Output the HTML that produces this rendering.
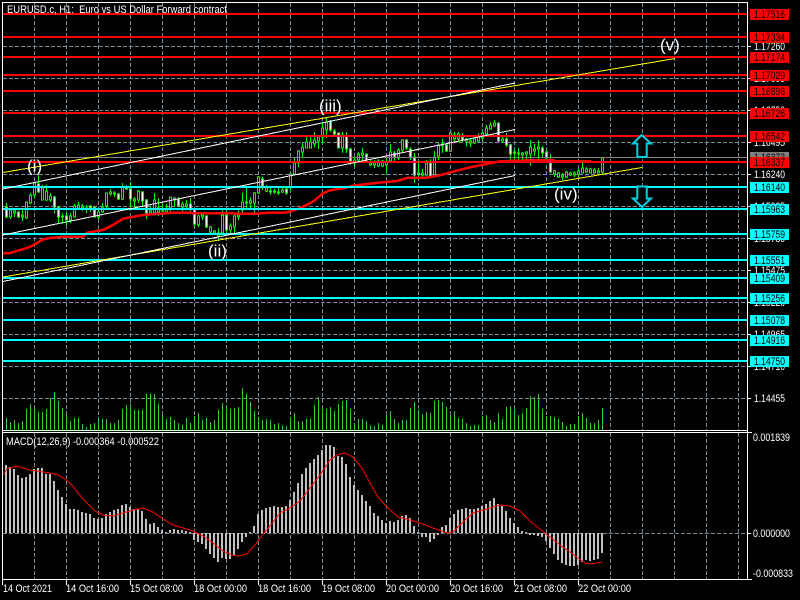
<!DOCTYPE html>
<html><head><meta charset="utf-8"><title>EURUSD.c H1</title>
<style>
html,body{margin:0;padding:0;background:#000;width:800px;height:600px;overflow:hidden}
svg{display:block;position:absolute;left:0;top:0}
text{font-family:"Liberation Sans",sans-serif;font-size:11px}
.w text,text.w{fill:#fff}
.k text{fill:#000}
</style></head><body>
<svg width="800" height="600" viewBox="0 0 800 600" xmlns="http://www.w3.org/2000/svg">
<rect width="800" height="600" fill="#000"/>
<!-- grid -->
<path shape-rendering="crispEdges" stroke="#778899" stroke-width="1" stroke-dasharray="4 2" fill="none" d="M34.5 3V430M66.5 3V430M98.5 3V430M130.5 3V430M162.5 3V430M194.5 3V430M226.5 3V430M258.5 3V430M290.5 3V430M322.5 3V430M354.5 3V430M386.5 3V430M418.5 3V430M450.5 3V430M482.5 3V430M514.5 3V430M546.5 3V430M578.5 3V430M610.5 3V430M642.5 3V430M674.5 3V430M706.5 3V430M738.5 3V430
M34.5 433V579M66.5 433V579M98.5 433V579M130.5 433V579M162.5 433V579M194.5 433V579M226.5 433V579M258.5 433V579M290.5 433V579M322.5 433V579M354.5 433V579M386.5 433V579M418.5 433V579M450.5 433V579M482.5 433V579M514.5 433V579M546.5 433V579M578.5 433V579M610.5 433V579M642.5 433V579M674.5 433V579M706.5 433V579M738.5 433V579
M3 46.5H747M3 78.5H747M3 110.5H747M3 142.5H747M3 174.5H747M3 206.5H747M3 238.5H747M3 270.5H747M3 302.5H747M3 334.5H747M3 366.5H747M3 398.5H747M3 533.5H747"/>
<!-- volumes -->
<path shape-rendering="crispEdges" stroke="#32cd32" stroke-width="1" fill="none" d="M6.5 430V418M10.5 430V422M14.5 430V420M18.5 430V423M22.5 430V421M26.5 430V409M30.5 430V404M34.5 430V409M38.5 430V412M42.5 430V412M46.5 430V409M50.5 430V398M54.5 430V392M58.5 430V401M62.5 430V408M66.5 430V414M70.5 430V421M74.5 430V418M78.5 430V418M82.5 430V424M86.5 430V427M90.5 430V424M94.5 430V423M98.5 430V419M102.5 430V419M106.5 430V419M110.5 430V423M114.5 430V423M118.5 430V420M122.5 430V409M126.5 430V405M130.5 430V404M134.5 430V410M138.5 430V410M142.5 430V410M146.5 430V394M150.5 430V394M154.5 430V394M158.5 430V404M162.5 430V415M166.5 430V419M170.5 430V417M174.5 430V420M178.5 430V423M182.5 430V425M186.5 430V418M190.5 430V423M194.5 430V416M198.5 430V413M202.5 430V420M206.5 430V418M210.5 430V422M214.5 430V420M218.5 430V410M222.5 430V403M226.5 430V405M230.5 430V409M234.5 430V408M238.5 430V407M242.5 430V388M246.5 430V394M250.5 430V402M254.5 430V411M258.5 430V417M262.5 430V420M266.5 430V419
M270.5 430V420M274.5 430V424M278.5 430V423M282.5 430V425M286.5 430V426M290.5 430V419M294.5 430V413M298.5 430V421M302.5 430V421M306.5 430V419M310.5 430V419M314.5 430V405M318.5 430V397M322.5 430V408M326.5 430V409M330.5 430V407M334.5 430V411M338.5 430V404M342.5 430V401M346.5 430V400M350.5 430V409M354.5 430V423M358.5 430V419M362.5 430V419M366.5 430V421M370.5 430V425M374.5 430V426M378.5 430V423M382.5 430V425M386.5 430V415M390.5 430V411M394.5 430V419M398.5 430V423M402.5 430V420M406.5 430V420M410.5 430V408M414.5 430V402M418.5 430V410M422.5 430V414M426.5 430V412M430.5 430V413M434.5 430V401M438.5 430V400M442.5 430V402M446.5 430V407M450.5 430V415M454.5 430V411M458.5 430V418M462.5 430V419M466.5 430V423M470.5 430V426M474.5 430V425M478.5 430V425M482.5 430V416M486.5 430V415M490.5 430V420M494.5 430V422M498.5 430V413M502.5 430V419M506.5 430V407M510.5 430V406M514.5 430V409M518.5 430V415M522.5 430V413M526.5 430V408M530.5 430V396M534.5 430V397M538.5 430V394
M542.5 430V409M546.5 430V416M550.5 430V416M554.5 430V417M558.5 430V419M562.5 430V422M566.5 430V426M570.5 430V424M574.5 430V424M578.5 430V416M582.5 430V413M586.5 430V418M590.5 430V423M594.5 430V423M598.5 430V420M602.5 430V408"/>
<!-- candle wicks -->
<path shape-rendering="crispEdges" stroke="#00ff00" stroke-width="1" fill="none" d="M6.5 203V218M10.5 209V219M14.5 210V217M18.5 211V218M22.5 210V221M26.5 202V219M30.5 193V204M34.5 182V197M38.5 175V193M42.5 185V200M46.5 185V201M50.5 193V202M54.5 196V213M58.5 207V223M62.5 213V224M66.5 212V225M70.5 213V223M74.5 204V217M78.5 202V210M82.5 204V211M86.5 205V213M90.5 205V212M94.5 207V217M98.5 208V220M102.5 203V213M106.5 193V208M110.5 189V196M114.5 191V197M118.5 193V200M122.5 183V200M126.5 185V190M130.5 182V207M134.5 197V207M138.5 190V203M142.5 191V206M146.5 199V219M150.5 206V215M154.5 193V213M158.5 198V216M162.5 205V213M166.5 204V213M170.5 197V213M174.5 197V207M178.5 197V207M182.5 202V212M186.5 200V208M190.5 198V213M194.5 208V227M198.5 213V227M202.5 213V220M206.5 215V228M210.5 226V233M214.5 230V234M218.5 228V241M222.5 209V233M226.5 210V233M230.5 223V233M234.5 213V233M238.5 210V220M242.5 193V213M246.5 187V209M250.5 197V208M254.5 192V213M258.5 176V194M262.5 177V190M266.5 185V192
M270.5 188V195M274.5 189V194M278.5 188V195M282.5 187V193M286.5 188V195M290.5 173V190M294.5 158V175M298.5 150V167M302.5 142V157M306.5 137V148M310.5 137V148M314.5 132V147M318.5 137V149M322.5 122V143M326.5 117V138M330.5 120V132M334.5 129V135M338.5 133V148M342.5 132V153M346.5 132V153M350.5 148V165M354.5 158V167M358.5 152V163M362.5 148V162M366.5 154V163M370.5 159V166M374.5 160V168M378.5 159V167M382.5 160V167M386.5 158V173M390.5 144V163M394.5 151V163M398.5 148V160M402.5 140V152M406.5 139V150M410.5 147V160M414.5 153V183M418.5 163V177M422.5 169V177M426.5 160V177M430.5 159V177M434.5 151V176M438.5 143V160M442.5 139V153M446.5 143V152M450.5 132V152M454.5 132V142M458.5 132V142M462.5 133V142M466.5 138V146M470.5 138V147M474.5 137V144M478.5 133V142M482.5 132V141M486.5 125V135M490.5 122V129M494.5 120V127M498.5 123V142M502.5 137V143M506.5 133V147M510.5 144V162M514.5 150V160M518.5 148V160M522.5 152V160M526.5 151V159M530.5 140V166M534.5 144V156M538.5 140V160M542.5 146V157M546.5 150V159M550.5 154V173M554.5 170V177M558.5 172V178M562.5 173V180M566.5 171V178M570.5 172V176M574.5 171V177M578.5 169V177M582.5 163V173M586.5 167V173M590.5 168V173M594.5 168V173M598.5 168V173M602.5 157V175"/>
<!-- bull bodies -->
<path shape-rendering="crispEdges" stroke="#00ff00" stroke-width="1" fill="#000" d="M9.5 210h2V217h-2zM13.5 211h2V213h-2zM21.5 215h2V217h-2zM25.5 202h2V218h-2zM29.5 195h2V203h-2zM33.5 183h2V195h-2zM41.5 188h2V200h-2zM45.5 191h2V200h-2zM49.5 196h2V200h-2zM61.5 216h2V217h-2zM69.5 216h2V220h-2zM73.5 206h2V217h-2zM77.5 205h2V208h-2zM81.5 206h2V208h-2zM85.5 208h2V209h-2zM97.5 212h2V217h-2zM101.5 207h2V212h-2zM105.5 193h2V206h-2zM109.5 192h2V194h-2zM113.5 193h2V194h-2zM121.5 187h2V199h-2zM133.5 199h2V201h-2zM137.5 191h2V200h-2zM149.5 211h2V213h-2zM153.5 200h2V213h-2zM157.5 208h2V212h-2zM161.5 210h2V211h-2zM165.5 209h2V212h-2zM169.5 197h2V208h-2zM173.5 198h2V200h-2zM181.5 204h2V207h-2zM185.5 204h2V206h-2zM197.5 216h2V225h-2zM201.5 215h2V217h-2zM209.5 227h2V232h-2zM213.5 231h2V233h-2zM217.5 233h2V236h-2zM221.5 215h2V233h-2zM229.5 226h2V230h-2zM233.5 216h2V227h-2zM237.5 215h2V217h-2zM241.5 202h2V210h-2zM245.5 202h2V203h-2zM249.5 201h2V203h-2zM253.5 193h2V203h-2zM257.5 177h2V193h-2zM265.5 188h2V191h-2z
M269.5 191h2V192h-2zM273.5 191h2V192h-2zM277.5 192h2V193h-2zM281.5 190h2V192h-2zM289.5 174h2V188h-2zM293.5 163h2V174h-2zM297.5 151h2V163h-2zM301.5 147h2V152h-2zM305.5 142h2V148h-2zM309.5 142h2V148h-2zM313.5 140h2V144h-2zM317.5 137h2V141h-2zM321.5 128h2V137h-2zM325.5 122h2V130h-2zM341.5 135h2V148h-2zM353.5 160h2V163h-2zM357.5 154h2V160h-2zM361.5 153h2V155h-2zM369.5 163h2V165h-2zM373.5 163h2V165h-2zM377.5 161h2V166h-2zM381.5 161h2V166h-2zM385.5 162h2V165h-2zM389.5 152h2V161h-2zM397.5 150h2V158h-2zM401.5 140h2V150h-2zM417.5 173h2V174h-2zM421.5 173h2V175h-2zM425.5 163h2V175h-2zM433.5 157h2V175h-2zM437.5 145h2V156h-2zM441.5 144h2V146h-2zM449.5 133h2V151h-2zM453.5 135h2V139h-2zM457.5 134h2V139h-2zM465.5 139h2V141h-2zM469.5 141h2V143h-2zM473.5 138h2V143h-2zM477.5 137h2V141h-2zM481.5 133h2V138h-2zM485.5 128h2V134h-2zM489.5 125h2V129h-2zM493.5 123h2V126h-2zM501.5 139h2V141h-2zM513.5 152h2V153h-2zM517.5 153h2V154h-2zM521.5 153h2V155h-2zM525.5 152h2V154h-2zM529.5 147h2V154h-2zM533.5 149h2V151h-2zM537.5 147h2V149h-2zM553.5 171h2V174h-2zM557.5 173h2V177h-2zM561.5 175h2V177h-2zM565.5 172h2V177h-2zM569.5 173h2V175h-2zM573.5 173h2V175h-2zM577.5 171h2V174h-2zM581.5 168h2V173h-2zM585.5 169h2V172h-2zM589.5 169h2V173h-2zM593.5 170h2V173h-2zM597.5 171h2V173h-2zM601.5 158h2V172h-2z"/>
<!-- bear bodies -->
<path shape-rendering="crispEdges" stroke="#00ff00" stroke-width="1" fill="#fff" d="M5.5 207h2V217h-2zM17.5 212h2V217h-2zM37.5 184h2V192h-2zM53.5 197h2V207h-2zM57.5 207h2V217h-2zM65.5 216h2V220h-2zM89.5 206h2V208h-2zM93.5 207h2V217h-2zM117.5 194h2V199h-2zM125.5 187h2V189h-2zM129.5 189h2V199h-2zM141.5 192h2V201h-2zM145.5 200h2V213h-2zM177.5 199h2V206h-2zM189.5 204h2V209h-2zM193.5 210h2V224h-2zM205.5 216h2V227h-2zM225.5 215h2V230h-2zM261.5 179h2V186h-2zM285.5 189h2V193h-2zM329.5 121h2V130h-2zM333.5 131h2V134h-2zM337.5 133h2V148h-2zM345.5 137h2V149h-2zM349.5 149h2V163h-2zM365.5 154h2V160h-2zM393.5 153h2V157h-2zM405.5 140h2V148h-2zM409.5 149h2V157h-2zM413.5 157h2V175h-2zM429.5 163h2V176h-2zM445.5 145h2V151h-2zM461.5 137h2V140h-2zM497.5 123h2V141h-2zM505.5 139h2V145h-2zM509.5 145h2V154h-2zM541.5 148h2V153h-2zM545.5 152h2V158h-2zM549.5 163h2V172h-2z"/>
<!-- moving average -->
<polyline shape-rendering="crispEdges" fill="none" stroke="#ff0000" stroke-width="2.5" points="3,253 10,253 20,250 30,247 43,239.5 50,238 63,236.7 83,236.7 87,232.7 103,230 113,225 123,218.7 143,215 173,212.7 210,213.3 257,213.7 270,212.7 283,212.7 290,211.7 300,208.3 313,201.7 323,193.3 330,190.3 343,188.3 353,185.7 367,184 383,182.3 397,181 407,178 427,177.7 437,176 453,171.7 470,167.3 487,164 500,161.3 540,160 555,160 "/>
<path shape-rendering="crispEdges" stroke="#ff0000" stroke-width="1" d="M555 160.5H591"/>
<!-- MACD histogram -->
<path shape-rendering="crispEdges" stroke="#c0c0c0" stroke-width="2" fill="none" d="M6 533V465M10 533V467M14 533V469M18 533V475M22 533V478M26 533V477M30 533V474M34 533V469M38 533V468M42 533V468M46 533V474M50 533V474M54 533V481M58 533V490M62 533V497M66 533V504M70 533V509M74 533V509M78 533V510M82 533V512M86 533V513M90 533V514M94 533V518M98 533V519M102 533V518M106 533V514M110 533V512M114 533V510M118 533V509M122 533V505M126 533V504M130 533V507M134 533V509M138 533V509M142 533V511M146 533V519M150 533V524M154 533V523M158 533V527M162 533V530M166 533V532M170 533V530M174 533V529M178 533V530M182 533V530M186 533V531M190 533V532M194 533V540M198 533V542M202 533V544M206 533V549M210 533V554M214 533V558M218 533V562M222 533V558M226 533V559M230 533V559M234 533V555M238 533V549M242 533V542M246 533V537M250 533V532M254 533V526M258 533V514M262 533V510M266 533V508
M270 533V507M274 533V506M278 533V507M282 533V507M286 533V506M290 533V500M294 533V492M298 533V483M302 533V474M306 533V468M310 533V463M314 533V459M318 533V455M322 533V450M326 533V445M330 533V445M334 533V447M338 533V456M342 533V457M346 533V464M350 533V477M354 533V485M358 533V490M362 533V495M366 533V501M370 533V506M374 533V513M378 533V516M382 533V520M386 533V523M390 533V521M394 533V522M398 533V520M402 533V516M406 533V515M410 533V518M414 533V526M418 533V532M422 533V537M426 533V537M430 533V542M434 533V539M438 533V535M442 533V527M446 533V525M450 533V518M454 533V514M458 533V510M462 533V509M466 533V508M470 533V509M474 533V509M478 533V508M482 533V506M486 533V504M490 533V501M494 533V498M498 533V504M502 533V506M506 533V511M510 533V518M514 533V523M518 533V527M522 533V531M526 533V532M530 533V535M534 533V535M538 533V536
M542 533V537M546 533V541M550 533V548M554 533V554M558 533V560M562 533V563M566 533V565M570 533V566M574 533V566M578 533V565M582 533V562M586 533V560M590 533V561M594 533V560M598 533V559M602 533V553"/>
<!-- MACD signal -->
<polyline fill="none" stroke="#ff0000" stroke-width="1" points="3,475 7,469 13,467 18,466 23,468 30,470 37,471 43,472 50,473 58,475 65,479 72,485 78,493 87,503 95,511 103,515 113,516 123,513 133,510 143,508 153,512 163,519 173,525 183,528 193,531 203,536 213,543 223,551 232,555 238,556 247,554 255,545 263,534 270,526 280,513 290,508 300,501 310,488 320,475 330,460 337,455 345,453 353,457 362,468 370,483 378,497 387,507 398,517 410,520 420,523 433,528 447,533 453,532 463,522 473,513 487,509 500,505 510,506 520,511 530,521 540,529 550,537 560,545 570,552 578,558 585,563 592,564 602,562"/>
<!-- price line -->
<rect x="3" y="157" width="744" height="1" fill="#808080"/>
<!-- horizontal levels -->
<g fill="#ff0000">
<rect x="3" y="13" width="744" height="2"/><rect x="3" y="36" width="744" height="2"/><rect x="3" y="56" width="744" height="2"/><rect x="3" y="74" width="744" height="2"/><rect x="3" y="90" width="744" height="2"/><rect x="3" y="112" width="744" height="2"/><rect x="3" y="135" width="744" height="2"/><rect x="3" y="161" width="744" height="2"/>
</g>
<g fill="#00ffff">
<rect x="3" y="186" width="744" height="2"/><rect x="3" y="208" width="744" height="2"/><rect x="3" y="233" width="744" height="2"/><rect x="3" y="259" width="744" height="2"/><rect x="3" y="277" width="744" height="2"/><rect x="3" y="297" width="744" height="2"/><rect x="3" y="319" width="744" height="2"/><rect x="3" y="339" width="744" height="2"/><rect x="3" y="360" width="744" height="2"/>
</g>
<!-- trend lines -->
<g shape-rendering="crispEdges" fill="none" stroke-width="1">
<line x1="3" y1="172.5" x2="675" y2="58.5" stroke="#ffff00"/>
<line x1="3" y1="277" x2="642" y2="167.5" stroke="#ffff00"/>
<line x1="3" y1="189" x2="515" y2="83" stroke="#fff"/>
<line x1="3" y1="235" x2="515" y2="129.5" stroke="#fff"/>
<line x1="3" y1="281.5" x2="515" y2="175.5" stroke="#fff"/>
</g>
<!-- arrows -->
<g fill="#000" stroke="#00d0e0" stroke-width="2">
<polygon points="641.7,135 651,143.5 646.7,143.5 646.7,157 637.3,157 637.3,143.5 633,143.5"/>
<polygon points="637.3,186.5 646.7,186.5 646.7,198.5 651,198.5 642,207 633,198.5 637.3,198.5"/>
</g>
<!-- wave labels -->
<g fill="#fff">
<text x="27" y="171.5" style="font-size:17px">(i)</text>
<text x="208" y="256.5" style="font-size:17px">(ii)</text>
<text x="319" y="111.5" style="font-size:17px">(iii)</text>
<text x="554" y="199.5" style="font-size:17px">(iv)</text>
<text x="660" y="50.5" style="font-size:17px">(v)</text>
</g>
<!-- frame -->
<g fill="#fff" shape-rendering="crispEdges">
<rect x="2" y="2" width="746" height="1"/><rect x="2" y="2" width="1" height="578"/><rect x="747" y="2" width="1" height="578"/>
<rect x="2" y="430" width="746" height="1"/><rect x="2" y="432" width="746" height="1"/><rect x="2" y="579" width="746" height="1"/>
<path d="M748 46h3v1h-3zM748 78h3v1h-3zM748 110h3v1h-3zM748 142h3v1h-3zM748 174h3v1h-3zM748 206h3v1h-3zM748 238h3v1h-3zM748 270h3v1h-3zM748 302h3v1h-3zM748 334h3v1h-3zM748 366h3v1h-3zM748 398h3v1h-3zM748 432h4v1h-4zM748 533h3v1h-3zM748 579h4v1h-4z"/>
<path d="M2 580h1v5h-1zM66 580h1v5h-1zM130 580h1v5h-1zM194 580h1v5h-1zM258 580h1v5h-1zM322 580h1v5h-1zM386 580h1v5h-1zM450 580h1v5h-1zM514 580h1v5h-1zM578 580h1v5h-1z"/>
</g>
<!-- titles -->
<g class="w">
<text x="7" y="13" textLength="220" lengthAdjust="spacingAndGlyphs" xml:space="preserve">EURUSD.c, H1:  Euro vs US Dollar Forward contract</text>
<text x="6" y="445" textLength="153" lengthAdjust="spacingAndGlyphs">MACD(12,26,9) -0.000364 -0.000522</text>
</g>
<!-- axis labels -->
<g class="w">
<text x="754" y="50" textLength="31" lengthAdjust="spacingAndGlyphs">1.17260</text>
<text x="754" y="82" textLength="31" lengthAdjust="spacingAndGlyphs">1.17005</text>
<text x="754" y="114" textLength="31" lengthAdjust="spacingAndGlyphs">1.16750</text>
<text x="754" y="146" textLength="31" lengthAdjust="spacingAndGlyphs">1.16495</text>
<text x="754" y="178" textLength="31" lengthAdjust="spacingAndGlyphs">1.16240</text>
<text x="754" y="210" textLength="31" lengthAdjust="spacingAndGlyphs">1.15985</text>
<text x="754" y="242" textLength="31" lengthAdjust="spacingAndGlyphs">1.15730</text>
<text x="754" y="274" textLength="31" lengthAdjust="spacingAndGlyphs">1.15475</text>
<text x="754" y="306" textLength="31" lengthAdjust="spacingAndGlyphs">1.15220</text>
<text x="754" y="338" textLength="31" lengthAdjust="spacingAndGlyphs">1.14965</text>
<text x="754" y="370" textLength="31" lengthAdjust="spacingAndGlyphs">1.14710</text>
<text x="754" y="402" textLength="31" lengthAdjust="spacingAndGlyphs">1.14455</text>
<text x="753" y="441" textLength="37" lengthAdjust="spacingAndGlyphs">0.001839</text>
<text x="753" y="537" textLength="37" lengthAdjust="spacingAndGlyphs">0.000000</text>
<text x="753" y="577" textLength="40" lengthAdjust="spacingAndGlyphs">-0.000833</text>
<text x="3" y="592" textLength="49" lengthAdjust="spacingAndGlyphs">14 Oct 2021</text>
<text x="66" y="592" textLength="53" lengthAdjust="spacingAndGlyphs">14 Oct 16:00</text>
<text x="130" y="592" textLength="53" lengthAdjust="spacingAndGlyphs">15 Oct 08:00</text>
<text x="194" y="592" textLength="53" lengthAdjust="spacingAndGlyphs">18 Oct 00:00</text>
<text x="258" y="592" textLength="53" lengthAdjust="spacingAndGlyphs">18 Oct 16:00</text>
<text x="322" y="592" textLength="53" lengthAdjust="spacingAndGlyphs">19 Oct 08:00</text>
<text x="386" y="592" textLength="53" lengthAdjust="spacingAndGlyphs">20 Oct 00:00</text>
<text x="450" y="592" textLength="53" lengthAdjust="spacingAndGlyphs">20 Oct 16:00</text>
<text x="514" y="592" textLength="53" lengthAdjust="spacingAndGlyphs">21 Oct 08:00</text>
<text x="578" y="592" textLength="53" lengthAdjust="spacingAndGlyphs">22 Oct 00:00</text>
</g>
<!-- price tags -->
<g shape-rendering="crispEdges" fill="#808080"><rect x="750" y="152" width="39" height="10"/></g>
<g class="k"><text x="754" y="161" textLength="31" lengthAdjust="spacingAndGlyphs">1.16373</text></g>
<g shape-rendering="crispEdges" fill="#ff0000">
<rect x="750" y="9" width="39" height="11"/><rect x="750" y="32" width="39" height="11"/><rect x="750" y="52" width="39" height="11"/><rect x="750" y="70" width="39" height="11"/><rect x="750" y="86" width="39" height="11"/><rect x="750" y="108" width="39" height="11"/><rect x="750" y="131" width="39" height="11"/><rect x="750" y="157" width="39" height="11"/>
</g>
<g shape-rendering="crispEdges" fill="#00ffff">
<rect x="750" y="182" width="39" height="11"/><rect x="750" y="204" width="39" height="11"/><rect x="750" y="229" width="39" height="11"/><rect x="750" y="255" width="39" height="11"/><rect x="750" y="273" width="39" height="11"/><rect x="750" y="293" width="39" height="11"/><rect x="750" y="315" width="39" height="11"/><rect x="750" y="335" width="39" height="11"/><rect x="750" y="356" width="39" height="11"/>
</g>
<g class="k">
<text x="754" y="18" textLength="31" lengthAdjust="spacingAndGlyphs">1.17516</text>
<text x="754" y="41" textLength="31" lengthAdjust="spacingAndGlyphs">1.17334</text>
<text x="754" y="61" textLength="31" lengthAdjust="spacingAndGlyphs">1.17174</text>
<text x="754" y="79" textLength="31" lengthAdjust="spacingAndGlyphs">1.17029</text>
<text x="754" y="95" textLength="31" lengthAdjust="spacingAndGlyphs">1.16898</text>
<text x="754" y="117" textLength="31" lengthAdjust="spacingAndGlyphs">1.16726</text>
<text x="754" y="140" textLength="31" lengthAdjust="spacingAndGlyphs">1.16542</text>
<text x="754" y="166" textLength="31" lengthAdjust="spacingAndGlyphs">1.16337</text>
<text x="754" y="191" textLength="31" lengthAdjust="spacingAndGlyphs">1.16140</text>
<text x="754" y="213" textLength="31" lengthAdjust="spacingAndGlyphs">1.15963</text>
<text x="754" y="238" textLength="31" lengthAdjust="spacingAndGlyphs">1.15759</text>
<text x="754" y="264" textLength="31" lengthAdjust="spacingAndGlyphs">1.15551</text>
<text x="754" y="282" textLength="31" lengthAdjust="spacingAndGlyphs">1.15409</text>
<text x="754" y="302" textLength="31" lengthAdjust="spacingAndGlyphs">1.15256</text>
<text x="754" y="324" textLength="31" lengthAdjust="spacingAndGlyphs">1.15078</text>
<text x="754" y="344" textLength="31" lengthAdjust="spacingAndGlyphs">1.14916</text>
<text x="754" y="365" textLength="31" lengthAdjust="spacingAndGlyphs">1.14750</text>
</g>
</svg>
</body></html>
